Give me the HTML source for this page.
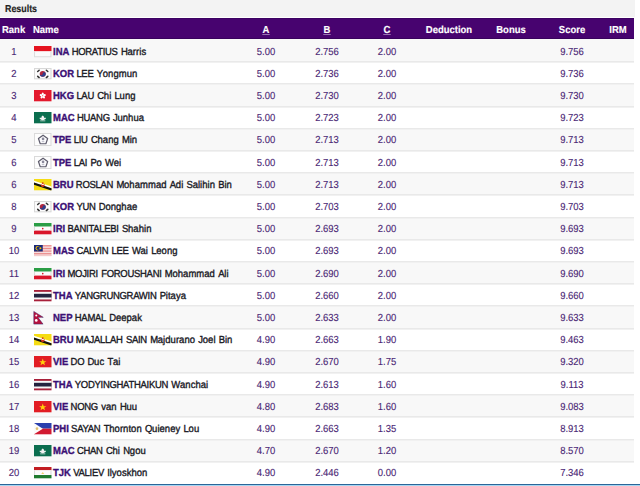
<!DOCTYPE html><html><head><meta charset="utf-8"><style>
*{box-sizing:border-box}
html,body{margin:0;padding:0;width:640px;height:486px;overflow:hidden;background:#fff;font-family:"Liberation Sans",sans-serif;}
.top{position:absolute;left:0;top:0;width:635px;height:17px;background:#f3f3f3;}
.t{position:absolute;white-space:nowrap;font-size:10.2px;line-height:12px;transform:scaleX(0.93);text-rendering:geometricPrecision;-webkit-text-stroke:0.35px currentColor}
.tl{transform-origin:0 50%}
.tc{transform-origin:50% 50%;text-align:center}
.hdr{position:absolute;left:0;top:18px;width:634px;height:21px;background:#47036f;border-top:1px solid #3d0262;border-bottom:1px solid #38025c;box-shadow:0 1px 0 #f4eef8}
.h{color:#fff;font-weight:bold;-webkit-text-stroke:0.15px currentColor}
u{text-decoration:none;position:relative}
u::after{content:'';position:absolute;left:-0.5px;right:-0.5px;top:9.5px;height:1px;background:rgba(235,225,245,.5)}
.title{color:#222}
.row{position:absolute;left:0;width:634px;}
.odd{background:#f8f8f8}
.sep{position:absolute;left:0;width:634px;height:2px;background:linear-gradient(#e9e9e9 0,#e9e9e9 50%,#f1f1f1 50%,#f1f1f1 100%)}
.rk{color:#3d2b6b;}
.num{color:#4a2674;-webkit-text-stroke:0.12px currentColor}
.fl{position:absolute;display:block}
.cc{font-weight:bold;color:#3b0f74;}
.nm{color:#18181f;margin-left:2.5px;letter-spacing:0.05px;word-spacing:0.65px}
.U{letter-spacing:-0.3px;font-style:normal}
.bot{position:absolute;left:0;top:484px;width:640px;height:1px;background:#2b6699}
.bot2{position:absolute;left:0;top:485px;width:640px;height:1px;background:#a6d6f2}
</style></head><body><div class="top"></div><div class="t tl h title" style="left:5px;top:3.5px;transform:scaleX(0.87)">Results</div><div class="hdr"></div><div class="t tl h" style="left:2px;top:24.5px;">Rank</div><div class="t tl h" style="left:33px;top:24.5px;">Name</div><div class="t tc h" style="left:226.0px;top:24.5px;width:80px;"><u>A</u></div><div class="t tc h" style="left:286.6px;top:24.5px;width:80px;"><u>B</u></div><div class="t tc h" style="left:347.3px;top:24.5px;width:80px;"><u>C</u></div><div class="t tc h" style="left:409.3px;top:24.5px;width:80px;">Deduction</div><div class="t tc h" style="left:471.25px;top:24.5px;width:80px;">Bonus</div><div class="t tc h" style="left:532.2px;top:24.5px;width:80px;">Score</div><div class="t tc h" style="left:578.3px;top:24.5px;width:80px;">IRM</div><div class="row odd" style="top:39px;height:22px"></div><div class="t tc num" style="left:-1.5px;top:46.5px;width:30px;">1</div><div class="fl" style="left:34px;top:45.5px;width:17.5px;height:11.3px"><svg width="17.5" height="11.3" viewBox="0 0 17 11" preserveAspectRatio="none" style="overflow:visible;display:block"><rect width="17" height="11" fill="#fbfbfb"/><rect width="17" height="5" fill="#e5131f"/><path d="M.5 5V10.5H16.5V5" fill="none" stroke="#dcdcdc"/></svg></div><div class="t tl " style="left:53px;top:46.5px;"><b class="cc">INA</b><span class="nm"><i class="U">HORATIUS</i> <i class="U">H</i>arris</span></div><div class="t tc num" style="left:246.0px;top:46.5px;width:40px;">5.00</div><div class="t tc num" style="left:306.6px;top:46.5px;width:40px;">2.756</div><div class="t tc num" style="left:367.3px;top:46.5px;width:40px;">2.00</div><div class="t tc num" style="left:542.2px;top:46.5px;width:60px;">9.756</div><div class="t tc num" style="left:-1.5px;top:68.7px;width:30px;">2</div><div class="fl" style="left:34px;top:67.7px;width:17.5px;height:11.3px"><svg width="17.5" height="11.3" viewBox="0 0 17 11" preserveAspectRatio="none" style="overflow:visible;display:block"><rect width="17" height="11" fill="#fcfcfc"/><rect x=".5" y=".5" width="16" height="10" fill="none" stroke="#d8d8d8" stroke-width="1"/><circle cx="8.5" cy="5.7" r="2.9" fill="#b0243c"/><path d="M5.6 5.7a2.9 2.9 0 0 0 5.8 0a1.45 1.45 0 0 0-2.9 0a1.45 1.45 0 0 1-2.9 0z" fill="#2b3f8c"/><g stroke="#333" stroke-width="1.5" stroke-linecap="round"><path d="M3.6 3.4l1.4-1.2M12 2.2l1.4 1.2M3.6 8.1l1.4 1.2M12 9.3l1.4-1.2"/></g></svg></div><div class="t tl " style="left:53px;top:68.7px;"><b class="cc">KOR</b><span class="nm"><i class="U">LEE</i> <i class="U">Y</i>ongmun</span></div><div class="t tc num" style="left:246.0px;top:68.7px;width:40px;">5.00</div><div class="t tc num" style="left:306.6px;top:68.7px;width:40px;">2.736</div><div class="t tc num" style="left:367.3px;top:68.7px;width:40px;">2.00</div><div class="t tc num" style="left:542.2px;top:68.7px;width:60px;">9.736</div><div class="row odd" style="top:85px;height:21px"></div><div class="t tc num" style="left:-1.5px;top:90.9px;width:30px;">3</div><div class="fl" style="left:34px;top:89.9px;width:17.5px;height:11.3px"><svg width="17.5" height="11.3" viewBox="0 0 17 11" preserveAspectRatio="none" style="overflow:visible;display:block"><rect width="17" height="11" fill="#e3192d"/><g fill="#fff" transform="translate(8.5 5.6)"><ellipse cx="0" cy="-1.6" rx="1.05" ry="1.5" transform="rotate(0)"/><ellipse cx="0" cy="-1.6" rx="1.05" ry="1.5" transform="rotate(72)"/><ellipse cx="0" cy="-1.6" rx="1.05" ry="1.5" transform="rotate(144)"/><ellipse cx="0" cy="-1.6" rx="1.05" ry="1.5" transform="rotate(216)"/><ellipse cx="0" cy="-1.6" rx="1.05" ry="1.5" transform="rotate(288)"/></g><circle cx="8.5" cy="5.6" r=".5" fill="#e3192d"/></svg></div><div class="t tl " style="left:53px;top:90.9px;"><b class="cc">HKG</b><span class="nm"><i class="U">LAU</i> <i class="U">C</i>hi <i class="U">L</i>ung</span></div><div class="t tc num" style="left:246.0px;top:90.9px;width:40px;">5.00</div><div class="t tc num" style="left:306.6px;top:90.9px;width:40px;">2.730</div><div class="t tc num" style="left:367.3px;top:90.9px;width:40px;">2.00</div><div class="t tc num" style="left:542.2px;top:90.9px;width:60px;">9.730</div><div class="t tc num" style="left:-1.5px;top:113.1px;width:30px;">4</div><div class="fl" style="left:34px;top:112.1px;width:17.5px;height:11.3px"><svg width="17.5" height="11.3" viewBox="0 0 17 11" preserveAspectRatio="none" style="overflow:visible;display:block"><rect width="17" height="11" fill="#0b6e4f"/><path d="M8.5 3.3c1 .6 1.4 1.5 1.2 2.4c.9-.4 1.7-.2 2 .2c-.5 1.4-2 2.1-3.2 2.1s-2.7-.7-3.2-2.1c.3-.4 1.1-.6 2-.2c-.2-.9.2-1.8 1.2-2.4z" fill="#f2f2f2"/><path d="M6 8.6h5" stroke="#f2f2f2" stroke-width=".7"/></svg></div><div class="t tl " style="left:53px;top:113.1px;"><b class="cc">MAC</b><span class="nm"><i class="U">HUANG</i> <i class="U">J</i>unhua</span></div><div class="t tc num" style="left:246.0px;top:113.1px;width:40px;">5.00</div><div class="t tc num" style="left:306.6px;top:113.1px;width:40px;">2.723</div><div class="t tc num" style="left:367.3px;top:113.1px;width:40px;">2.00</div><div class="t tc num" style="left:542.2px;top:113.1px;width:60px;">9.723</div><div class="row odd" style="top:130px;height:20px"></div><div class="t tc num" style="left:-1.5px;top:135.3px;width:30px;">5</div><div class="fl" style="left:34px;top:133.3px;width:17.5px;height:13px"><svg width="17.5" height="13" viewBox="0 0 17 13" preserveAspectRatio="none" style="overflow:visible;display:block"><rect x=".5" y=".5" width="16" height="12" fill="#fdfdfd" stroke="#dadada"/><path d="M8.80 2.20 L13.27 5.45 L11.56 10.70 L6.04 10.70 L4.33 5.45Z" fill="#fafafc" stroke="#5e5c6c" stroke-width="1.15" stroke-linejoin="round"/><circle cx="8.8" cy="5.9" r="1.3" fill="#8c8a9c"/><path d="M7.6 8.6h2.4" stroke="#b8b6c4" stroke-width=".9"/></svg></div><div class="t tl " style="left:53px;top:135.3px;"><b class="cc">TPE</b><span class="nm"><i class="U">LIU</i> <i class="U">C</i>hang <i class="U">M</i>in</span></div><div class="t tc num" style="left:246.0px;top:135.3px;width:40px;">5.00</div><div class="t tc num" style="left:306.6px;top:135.3px;width:40px;">2.713</div><div class="t tc num" style="left:367.3px;top:135.3px;width:40px;">2.00</div><div class="t tc num" style="left:542.2px;top:135.3px;width:60px;">9.713</div><div class="t tc num" style="left:-1.5px;top:157.5px;width:30px;">6</div><div class="fl" style="left:34px;top:155.5px;width:17.5px;height:13px"><svg width="17.5" height="13" viewBox="0 0 17 13" preserveAspectRatio="none" style="overflow:visible;display:block"><rect x=".5" y=".5" width="16" height="12" fill="#fdfdfd" stroke="#dadada"/><path d="M8.80 2.20 L13.27 5.45 L11.56 10.70 L6.04 10.70 L4.33 5.45Z" fill="#fafafc" stroke="#5e5c6c" stroke-width="1.15" stroke-linejoin="round"/><circle cx="8.8" cy="5.9" r="1.3" fill="#8c8a9c"/><path d="M7.6 8.6h2.4" stroke="#b8b6c4" stroke-width=".9"/></svg></div><div class="t tl " style="left:53px;top:157.5px;"><b class="cc">TPE</b><span class="nm"><i class="U">LAI</i> <i class="U">P</i>o <i class="U">W</i>ei</span></div><div class="t tc num" style="left:246.0px;top:157.5px;width:40px;">5.00</div><div class="t tc num" style="left:306.6px;top:157.5px;width:40px;">2.713</div><div class="t tc num" style="left:367.3px;top:157.5px;width:40px;">2.00</div><div class="t tc num" style="left:542.2px;top:157.5px;width:60px;">9.713</div><div class="row odd" style="top:174px;height:20px"></div><div class="t tc num" style="left:-1.5px;top:179.7px;width:30px;">6</div><div class="fl" style="left:34px;top:178.7px;width:17.5px;height:11.3px"><svg width="17.5" height="11.3" viewBox="0 0 17 11" preserveAspectRatio="none" style="overflow:visible;display:block"><rect width="17" height="11" fill="#f5dc14"/><path d="M0 1.8L17 7.3V9.2L0 3.7z" fill="#fff"/><path d="M0 3.4L17 8.9V11H16L0 5.7z" fill="#111"/><path d="M6.5 4.6q2 2.6 4 0l-.4 2.4q-1.6 1.4-3.2 0z" fill="#d0321e"/><circle cx="8.5" cy="4" r=".9" fill="#d0321e"/></svg></div><div class="t tl " style="left:53px;top:179.7px;"><b class="cc">BRU</b><span class="nm"><i class="U">ROSLAN</i> <i class="U">M</i>ohammad <i class="U">A</i>di <i class="U">S</i>alihin <i class="U">B</i>in</span></div><div class="t tc num" style="left:246.0px;top:179.7px;width:40px;">5.00</div><div class="t tc num" style="left:306.6px;top:179.7px;width:40px;">2.713</div><div class="t tc num" style="left:367.3px;top:179.7px;width:40px;">2.00</div><div class="t tc num" style="left:542.2px;top:179.7px;width:60px;">9.713</div><div class="t tc num" style="left:-1.5px;top:201.9px;width:30px;">8</div><div class="fl" style="left:34px;top:200.9px;width:17.5px;height:11.3px"><svg width="17.5" height="11.3" viewBox="0 0 17 11" preserveAspectRatio="none" style="overflow:visible;display:block"><rect width="17" height="11" fill="#fcfcfc"/><rect x=".5" y=".5" width="16" height="10" fill="none" stroke="#d8d8d8" stroke-width="1"/><circle cx="8.5" cy="5.7" r="2.9" fill="#b0243c"/><path d="M5.6 5.7a2.9 2.9 0 0 0 5.8 0a1.45 1.45 0 0 0-2.9 0a1.45 1.45 0 0 1-2.9 0z" fill="#2b3f8c"/><g stroke="#333" stroke-width="1.5" stroke-linecap="round"><path d="M3.6 3.4l1.4-1.2M12 2.2l1.4 1.2M3.6 8.1l1.4 1.2M12 9.3l1.4-1.2"/></g></svg></div><div class="t tl " style="left:53px;top:201.9px;"><b class="cc">KOR</b><span class="nm"><i class="U">YUN</i> <i class="U">D</i>onghae</span></div><div class="t tc num" style="left:246.0px;top:201.9px;width:40px;">5.00</div><div class="t tc num" style="left:306.6px;top:201.9px;width:40px;">2.703</div><div class="t tc num" style="left:367.3px;top:201.9px;width:40px;">2.00</div><div class="t tc num" style="left:542.2px;top:201.9px;width:60px;">9.703</div><div class="row odd" style="top:219px;height:20px"></div><div class="t tc num" style="left:-1.5px;top:224.1px;width:30px;">9</div><div class="fl" style="left:34px;top:223.1px;width:17.5px;height:11.3px"><svg width="17.5" height="11.3" viewBox="0 0 17 11" preserveAspectRatio="none" style="overflow:visible;display:block"><rect width="17" height="3.6" fill="#2a9d45"/><rect y="3.6" width="17" height="3.8" fill="#fbfbfb"/><rect y="7.4" width="17" height="3.6" fill="#d9162a"/><circle cx="8.5" cy="5.5" r=".8" fill="#d9162a"/><path d="M.5 3.6V7.4M16.5 3.6V7.4" stroke="#dcdcdc"/></svg></div><div class="t tl " style="left:53px;top:224.1px;"><b class="cc">IRI</b><span class="nm"><i class="U">BANITALEBI</i> <i class="U">S</i>hahin</span></div><div class="t tc num" style="left:246.0px;top:224.1px;width:40px;">5.00</div><div class="t tc num" style="left:306.6px;top:224.1px;width:40px;">2.693</div><div class="t tc num" style="left:367.3px;top:224.1px;width:40px;">2.00</div><div class="t tc num" style="left:542.2px;top:224.1px;width:60px;">9.693</div><div class="t tc num" style="left:-1.5px;top:246.29999999999998px;width:30px;">10</div><div class="fl" style="left:34px;top:245.29999999999998px;width:17.5px;height:11.3px"><svg width="17.5" height="11.3" viewBox="0 0 17 11" preserveAspectRatio="none" style="overflow:visible;display:block"><rect y="0.000" width="17" height="0.786" fill="#e56a6a"/><rect y="0.786" width="17" height="0.786" fill="#f6e0e0"/><rect y="1.571" width="17" height="0.786" fill="#e56a6a"/><rect y="2.357" width="17" height="0.786" fill="#f6e0e0"/><rect y="3.143" width="17" height="0.786" fill="#e56a6a"/><rect y="3.929" width="17" height="0.786" fill="#f6e0e0"/><rect y="4.714" width="17" height="0.786" fill="#e56a6a"/><rect y="5.500" width="17" height="0.786" fill="#f6e0e0"/><rect y="6.286" width="17" height="0.786" fill="#e56a6a"/><rect y="7.071" width="17" height="0.786" fill="#f6e0e0"/><rect y="7.857" width="17" height="0.786" fill="#e56a6a"/><rect y="8.643" width="17" height="0.786" fill="#f6e0e0"/><rect y="9.429" width="17" height="0.786" fill="#e56a6a"/><rect y="10.214" width="17" height="0.786" fill="#f6e0e0"/><rect width="8.5" height="6.3" fill="#1b2a7a"/><circle cx="3.6" cy="3.15" r="2.1" fill="#f2c200"/><circle cx="4.3" cy="3.15" r="1.75" fill="#1b2a7a"/><circle cx="6.2" cy="3.15" r="1" fill="#f2c200"/></svg></div><div class="t tl " style="left:53px;top:246.29999999999998px;"><b class="cc">MAS</b><span class="nm"><i class="U">CALVIN</i> <i class="U">LEE</i> <i class="U">W</i>ai <i class="U">L</i>eong</span></div><div class="t tc num" style="left:246.0px;top:246.29999999999998px;width:40px;">5.00</div><div class="t tc num" style="left:306.6px;top:246.29999999999998px;width:40px;">2.693</div><div class="t tc num" style="left:367.3px;top:246.29999999999998px;width:40px;">2.00</div><div class="t tc num" style="left:542.2px;top:246.29999999999998px;width:60px;">9.693</div><div class="row odd" style="top:263px;height:20px"></div><div class="t tc num" style="left:-1.5px;top:268.5px;width:30px;">11</div><div class="fl" style="left:34px;top:267.5px;width:17.5px;height:11.3px"><svg width="17.5" height="11.3" viewBox="0 0 17 11" preserveAspectRatio="none" style="overflow:visible;display:block"><rect width="17" height="3.6" fill="#2a9d45"/><rect y="3.6" width="17" height="3.8" fill="#fbfbfb"/><rect y="7.4" width="17" height="3.6" fill="#d9162a"/><circle cx="8.5" cy="5.5" r=".8" fill="#d9162a"/><path d="M.5 3.6V7.4M16.5 3.6V7.4" stroke="#dcdcdc"/></svg></div><div class="t tl " style="left:53px;top:268.5px;"><b class="cc">IRI</b><span class="nm"><i class="U">MOJIRI</i> <i class="U">FOROUSHANI</i> <i class="U">M</i>ohammad <i class="U">A</i>li</span></div><div class="t tc num" style="left:246.0px;top:268.5px;width:40px;">5.00</div><div class="t tc num" style="left:306.6px;top:268.5px;width:40px;">2.690</div><div class="t tc num" style="left:367.3px;top:268.5px;width:40px;">2.00</div><div class="t tc num" style="left:542.2px;top:268.5px;width:60px;">9.690</div><div class="t tc num" style="left:-1.5px;top:290.7px;width:30px;">12</div><div class="fl" style="left:34px;top:289.7px;width:17.5px;height:11.3px"><svg width="17.5" height="11.3" viewBox="0 0 17 11" preserveAspectRatio="none" style="overflow:visible;display:block"><rect width="17" height="11" fill="#a8203a"/><rect y="1.8" width="17" height="7.4" fill="#f6f6f8"/><rect y="3.7" width="17" height="3.6" fill="#24223f"/></svg></div><div class="t tl " style="left:53px;top:290.7px;"><b class="cc">THA</b><span class="nm"><i class="U">YANGRUNGRAWIN</i> <i class="U">P</i>itaya</span></div><div class="t tc num" style="left:246.0px;top:290.7px;width:40px;">5.00</div><div class="t tc num" style="left:306.6px;top:290.7px;width:40px;">2.660</div><div class="t tc num" style="left:367.3px;top:290.7px;width:40px;">2.00</div><div class="t tc num" style="left:542.2px;top:290.7px;width:60px;">9.660</div><div class="row odd" style="top:307px;height:21px"></div><div class="t tc num" style="left:-1.5px;top:312.9px;width:30px;">13</div><div class="fl" style="left:34px;top:311.9px;width:17.5px;height:11.3px"><svg width="17.5" height="11.3" viewBox="0 0 17 11" preserveAspectRatio="none" style="overflow:visible;display:block"><path d="M-.2 -.6L9 5.2H3.8L8.8 11.8H-.2z" fill="#b8123e" stroke="#3a2a6a" stroke-width=".5" stroke-linejoin="miter"/><circle cx="2.2" cy="3.4" r="1" fill="#fff"/><circle cx="2.2" cy="8.2" r="1.3" fill="#fff"/></svg></div><div class="t tl " style="left:53px;top:312.9px;"><b class="cc">NEP</b><span class="nm"><i class="U">HAMAL</i> <i class="U">D</i>eepak</span></div><div class="t tc num" style="left:246.0px;top:312.9px;width:40px;">5.00</div><div class="t tc num" style="left:306.6px;top:312.9px;width:40px;">2.633</div><div class="t tc num" style="left:367.3px;top:312.9px;width:40px;">2.00</div><div class="t tc num" style="left:542.2px;top:312.9px;width:60px;">9.633</div><div class="t tc num" style="left:-1.5px;top:335.09999999999997px;width:30px;">14</div><div class="fl" style="left:34px;top:334.09999999999997px;width:17.5px;height:11.3px"><svg width="17.5" height="11.3" viewBox="0 0 17 11" preserveAspectRatio="none" style="overflow:visible;display:block"><rect width="17" height="11" fill="#f5dc14"/><path d="M0 1.8L17 7.3V9.2L0 3.7z" fill="#fff"/><path d="M0 3.4L17 8.9V11H16L0 5.7z" fill="#111"/><path d="M6.5 4.6q2 2.6 4 0l-.4 2.4q-1.6 1.4-3.2 0z" fill="#d0321e"/><circle cx="8.5" cy="4" r=".9" fill="#d0321e"/></svg></div><div class="t tl " style="left:53px;top:335.09999999999997px;"><b class="cc">BRU</b><span class="nm"><i class="U">MAJALLAH</i> <i class="U">SAIN</i> <i class="U">M</i>ajdurano <i class="U">J</i>oel <i class="U">B</i>in</span></div><div class="t tc num" style="left:246.0px;top:335.09999999999997px;width:40px;">4.90</div><div class="t tc num" style="left:306.6px;top:335.09999999999997px;width:40px;">2.663</div><div class="t tc num" style="left:367.3px;top:335.09999999999997px;width:40px;">1.90</div><div class="t tc num" style="left:542.2px;top:335.09999999999997px;width:60px;">9.463</div><div class="row odd" style="top:352px;height:20px"></div><div class="t tc num" style="left:-1.5px;top:357.3px;width:30px;">15</div><div class="fl" style="left:34px;top:356.3px;width:17.5px;height:11.3px"><svg width="17.5" height="11.3" viewBox="0 0 17 11" preserveAspectRatio="none" style="overflow:visible;display:block"><rect width="17" height="11" fill="#e21d24"/><path d="M8.5 2.5l.9 2.5h2.6l-2.1 1.55.8 2.5-2.2-1.55-2.2 1.55.8-2.5-2.1-1.55h2.6z" fill="#ffd30a"/></svg></div><div class="t tl " style="left:53px;top:357.3px;"><b class="cc">VIE</b><span class="nm"><i class="U">DO</i> <i class="U">D</i>uc <i class="U">T</i>ai</span></div><div class="t tc num" style="left:246.0px;top:357.3px;width:40px;">4.90</div><div class="t tc num" style="left:306.6px;top:357.3px;width:40px;">2.670</div><div class="t tc num" style="left:367.3px;top:357.3px;width:40px;">1.75</div><div class="t tc num" style="left:542.2px;top:357.3px;width:60px;">9.320</div><div class="t tc num" style="left:-1.5px;top:379.5px;width:30px;">16</div><div class="fl" style="left:34px;top:378.5px;width:17.5px;height:11.3px"><svg width="17.5" height="11.3" viewBox="0 0 17 11" preserveAspectRatio="none" style="overflow:visible;display:block"><rect width="17" height="11" fill="#a8203a"/><rect y="1.8" width="17" height="7.4" fill="#f6f6f8"/><rect y="3.7" width="17" height="3.6" fill="#24223f"/></svg></div><div class="t tl " style="left:53px;top:379.5px;"><b class="cc">THA</b><span class="nm"><i class="U">YODYINGHATHAIKUN</i> <i class="U">W</i>anchai</span></div><div class="t tc num" style="left:246.0px;top:379.5px;width:40px;">4.90</div><div class="t tc num" style="left:306.6px;top:379.5px;width:40px;">2.613</div><div class="t tc num" style="left:367.3px;top:379.5px;width:40px;">1.60</div><div class="t tc num" style="left:542.2px;top:379.5px;width:60px;">9.113</div><div class="row odd" style="top:396px;height:20px"></div><div class="t tc num" style="left:-1.5px;top:401.7px;width:30px;">17</div><div class="fl" style="left:34px;top:400.7px;width:17.5px;height:11.3px"><svg width="17.5" height="11.3" viewBox="0 0 17 11" preserveAspectRatio="none" style="overflow:visible;display:block"><rect width="17" height="11" fill="#e21d24"/><path d="M8.5 2.5l.9 2.5h2.6l-2.1 1.55.8 2.5-2.2-1.55-2.2 1.55.8-2.5-2.1-1.55h2.6z" fill="#ffd30a"/></svg></div><div class="t tl " style="left:53px;top:401.7px;"><b class="cc">VIE</b><span class="nm"><i class="U">NONG</i> van <i class="U">H</i>uu</span></div><div class="t tc num" style="left:246.0px;top:401.7px;width:40px;">4.80</div><div class="t tc num" style="left:306.6px;top:401.7px;width:40px;">2.683</div><div class="t tc num" style="left:367.3px;top:401.7px;width:40px;">1.60</div><div class="t tc num" style="left:542.2px;top:401.7px;width:60px;">9.083</div><div class="t tc num" style="left:-1.5px;top:423.9px;width:30px;">18</div><div class="fl" style="left:34px;top:422.9px;width:17.5px;height:11.3px"><svg width="17.5" height="11.3" viewBox="0 0 17 11" preserveAspectRatio="none" style="overflow:visible;display:block"><rect width="17" height="5.5" fill="#2a3fae"/><rect y="5.5" width="17" height="5.5" fill="#d21a31"/><path d="M0 0L8.6 5.5L0 11z" fill="#fbfbfb"/><circle cx="2.9" cy="5.5" r="1.3" fill="#e0c070"/></svg></div><div class="t tl " style="left:53px;top:423.9px;"><b class="cc">PHI</b><span class="nm"><i class="U">SAYAN</i> <i class="U">T</i>hornton <i class="U">Q</i>uieney <i class="U">L</i>ou</span></div><div class="t tc num" style="left:246.0px;top:423.9px;width:40px;">4.90</div><div class="t tc num" style="left:306.6px;top:423.9px;width:40px;">2.663</div><div class="t tc num" style="left:367.3px;top:423.9px;width:40px;">1.35</div><div class="t tc num" style="left:542.2px;top:423.9px;width:60px;">8.913</div><div class="row odd" style="top:441px;height:20px"></div><div class="t tc num" style="left:-1.5px;top:446.09999999999997px;width:30px;">19</div><div class="fl" style="left:34px;top:445.09999999999997px;width:17.5px;height:11.3px"><svg width="17.5" height="11.3" viewBox="0 0 17 11" preserveAspectRatio="none" style="overflow:visible;display:block"><rect width="17" height="11" fill="#0b6e4f"/><path d="M8.5 3.3c1 .6 1.4 1.5 1.2 2.4c.9-.4 1.7-.2 2 .2c-.5 1.4-2 2.1-3.2 2.1s-2.7-.7-3.2-2.1c.3-.4 1.1-.6 2-.2c-.2-.9.2-1.8 1.2-2.4z" fill="#f2f2f2"/><path d="M6 8.6h5" stroke="#f2f2f2" stroke-width=".7"/></svg></div><div class="t tl " style="left:53px;top:446.09999999999997px;"><b class="cc">MAC</b><span class="nm"><i class="U">CHAN</i> <i class="U">C</i>hi <i class="U">N</i>gou</span></div><div class="t tc num" style="left:246.0px;top:446.09999999999997px;width:40px;">4.70</div><div class="t tc num" style="left:306.6px;top:446.09999999999997px;width:40px;">2.670</div><div class="t tc num" style="left:367.3px;top:446.09999999999997px;width:40px;">1.20</div><div class="t tc num" style="left:542.2px;top:446.09999999999997px;width:60px;">8.570</div><div class="t tc num" style="left:-1.5px;top:468.3px;width:30px;">20</div><div class="fl" style="left:34px;top:467.3px;width:17.5px;height:11.3px"><svg width="17.5" height="11.3" viewBox="0 0 17 11" preserveAspectRatio="none" style="overflow:visible;display:block"><rect width="17" height="3.2" fill="#c21d22"/><rect y="3.2" width="17" height="4.6" fill="#fbfbfb"/><rect y="7.8" width="17" height="3.2" fill="#1f7a2e"/><path d="M7 6.6l1.5-1.6 1.5 1.6z" fill="#f0c040"/><path d="M.5 3.2V7.8M16.5 3.2V7.8" stroke="#dcdcdc"/></svg></div><div class="t tl " style="left:53px;top:468.3px;"><b class="cc">TJK</b><span class="nm"><i class="U">VALIEV</i> <i class="U">I</i>lyoskhon</span></div><div class="t tc num" style="left:246.0px;top:468.3px;width:40px;">4.90</div><div class="t tc num" style="left:306.6px;top:468.3px;width:40px;">2.446</div><div class="t tc num" style="left:367.3px;top:468.3px;width:40px;">0.00</div><div class="t tc num" style="left:542.2px;top:468.3px;width:60px;">7.346</div><div class="sep" style="top:61px"></div><div class="sep" style="top:83px"></div><div class="sep" style="top:106px"></div><div class="sep" style="top:128px"></div><div class="sep" style="top:150px"></div><div class="sep" style="top:172px"></div><div class="sep" style="top:194px"></div><div class="sep" style="top:217px"></div><div class="sep" style="top:239px"></div><div class="sep" style="top:261px"></div><div class="sep" style="top:283px"></div><div class="sep" style="top:305px"></div><div class="sep" style="top:328px"></div><div class="sep" style="top:350px"></div><div class="sep" style="top:372px"></div><div class="sep" style="top:394px"></div><div class="sep" style="top:416px"></div><div class="sep" style="top:439px"></div><div class="sep" style="top:461px"></div><div class="bot"></div><div class="bot2"></div></body></html>
